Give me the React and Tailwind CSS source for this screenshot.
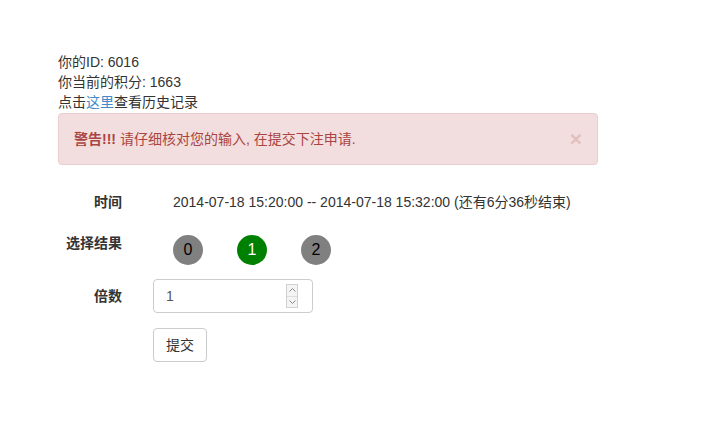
import React from "react";

export default function App() {
  return (
    <div
      className="min-h-[423px] w-[717px] bg-white text-[14px] leading-[20px] text-[#333]"
      style={{ fontFamily: '"Liberation Sans", "Noto Sans CJK SC", sans-serif' }}
    >
      <div className="pl-[58px] pt-[52px] w-[540px] box-content">
        <div>你的ID: 6016</div>
        <div>你当前的积分: 1663</div>
        <div>
          点击<a className="text-[#428bca]">这里</a>查看历史记录
        </div>

        <div className="mt-px flex items-center justify-between rounded-[4px] border border-[#ebccd1] bg-[#f2dede] p-[15px] text-[#a94442]">
          <div>
            <strong className="font-bold">警告!!!</strong> 请仔细核对您的输入, 在提交下注申请.
          </div>
          <span className="text-[21px] font-bold leading-[20px] text-[#a94442] opacity-20">×</span>
        </div>

        <div className="mt-5 flex h-[34px] items-start">
          <div className="w-[64px] py-[7px] text-right font-bold">时间</div>
          <div className="ml-[31px] py-[7px] pl-[20px] whitespace-nowrap">
            2014-07-18 15:20:00 -- 2014-07-18 15:32:00 (还有6分36秒结束)
          </div>
        </div>

        <div className="mt-[14px] flex items-start">
          <div className="w-[64px] text-right font-bold">选择结果</div>
          <div className="ml-[31px] mt-[2px] flex gap-[34px] pl-[20px]">
            <div className="flex h-[30px] w-[30px] items-center justify-center rounded-full bg-[#808080] text-[16px] text-black">0</div>
            <div className="flex h-[30px] w-[30px] items-center justify-center rounded-full bg-[#008000] text-[16px] text-white">1</div>
            <div className="flex h-[30px] w-[30px] items-center justify-center rounded-full bg-[#808080] text-[16px] text-black">2</div>
          </div>
        </div>

        <div className="mt-[14px] flex items-start">
          <div className="w-[64px] py-[7px] text-right font-bold">倍数</div>
          <div className="ml-[31px] relative flex h-[34px] w-[160px] items-center rounded-[4px] border border-[#ccc] px-[12px] text-[#555]">
            1
            <div className="absolute right-[14px] top-[4px] flex h-[24px] w-[12px] flex-col border border-[#d0d0d0] bg-[#f4f4f4]">
              <div className="flex flex-1 items-center justify-center border-b border-[#dcdcdc]">
                <svg width="7" height="4" viewBox="0 0 7 4"><path d="M0.5 3.5 L3.5 0.5 L6.5 3.5" fill="none" stroke="#888" strokeWidth="1" /></svg>
              </div>
              <div className="flex flex-1 items-center justify-center">
                <svg width="7" height="4" viewBox="0 0 7 4"><path d="M0.5 0.5 L3.5 3.5 L6.5 0.5" fill="none" stroke="#888" strokeWidth="1" /></svg>
              </div>
            </div>
          </div>
        </div>

        <div className="mt-[15px] flex">
          <div className="ml-[95px] flex h-[34px] items-center rounded-[4px] border border-[#ccc] bg-white px-[12px] text-[#333]">
            提交
          </div>
        </div>
      </div>
    </div>
  );
}
